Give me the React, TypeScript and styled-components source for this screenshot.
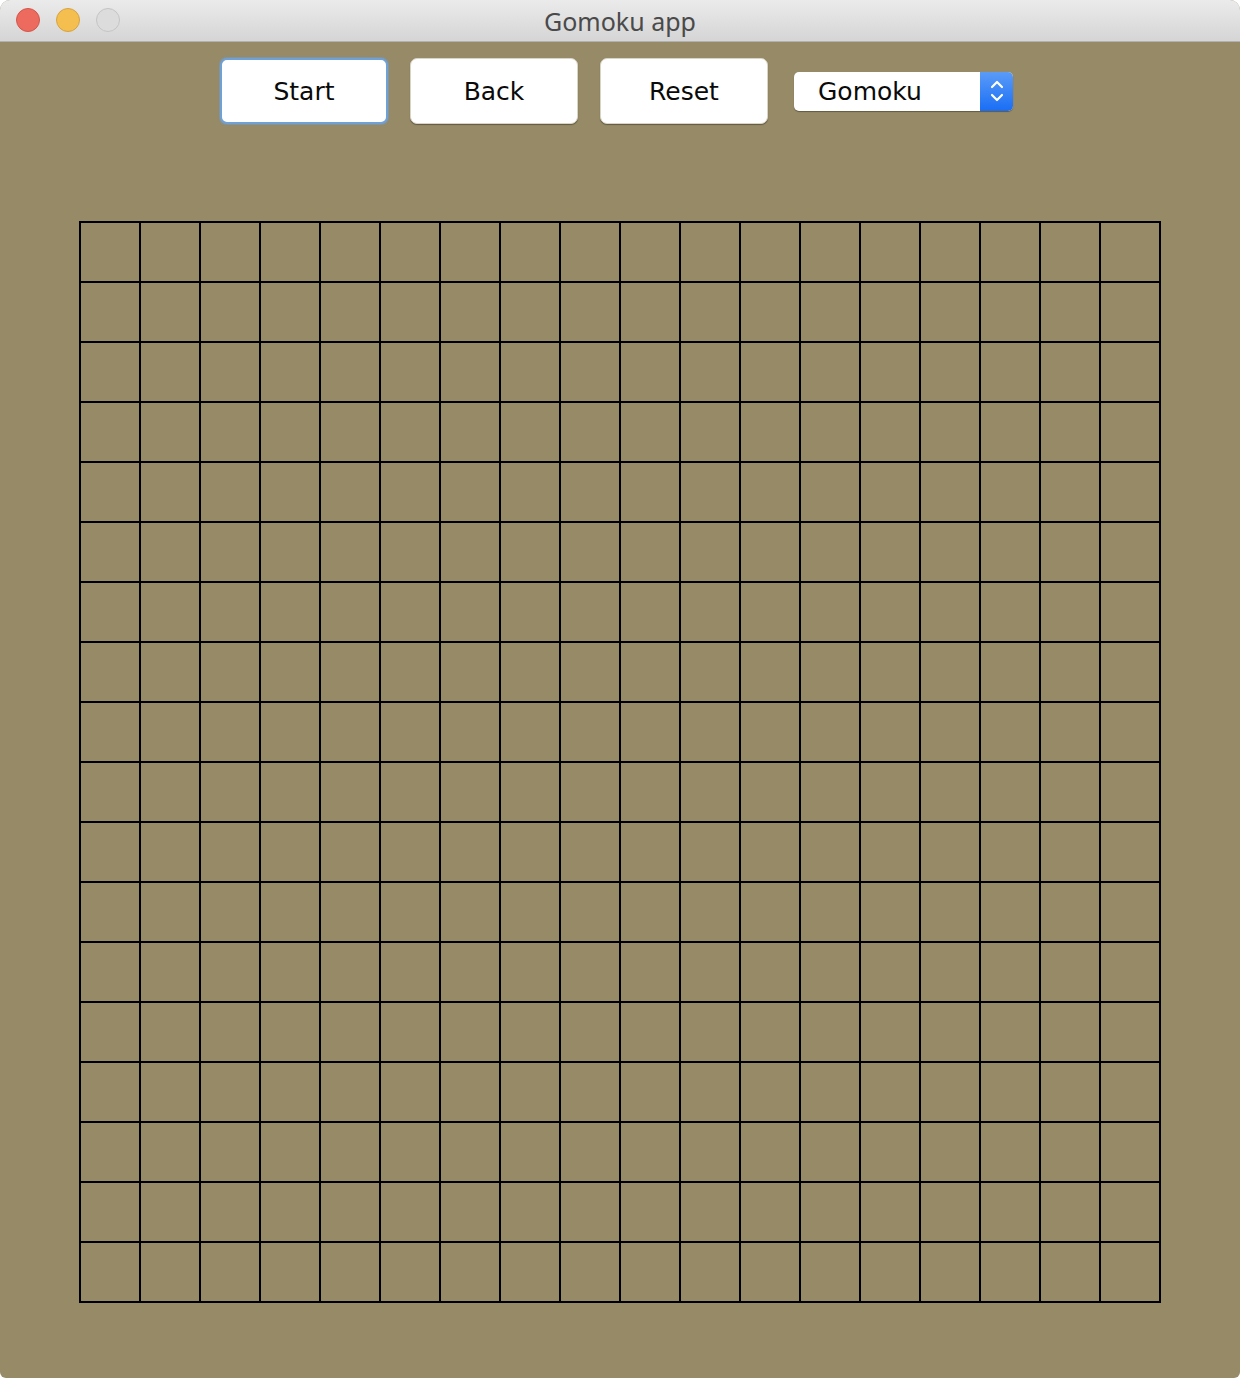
import React from "react";
import styled, { createGlobalStyle } from "styled-components";

const SIZE = 18;

function App() {
  const cells = Array.from({ length: SIZE * SIZE });
  return (
    <>
      <GlobalStyle />
      <Window>
        <TitleBar>
          <Lights>
            <Light color="#ed6a5e" edge="#d2564b" />
            <Light color="#f5bf4f" edge="#d6a243" />
            <Light color="#dcdcdc" edge="#c4c4c4" />
          </Lights>
          <Title>Gomoku app</Title>
        </TitleBar>
        <Content>
          <Toolbar>
            <Button focused>Start</Button>
            <Button>Back</Button>
            <Button>Reset</Button>
            <Select>
              <SelectText>Gomoku</SelectText>
              <SelectArrows>
                <svg width="16" height="26" viewBox="0 0 16 26">
                  <path
                    d="M3 9 L8 4 L13 9 M3 17 L8 22 L13 17"
                    fill="none"
                    stroke="#fff"
                    strokeWidth="2.2"
                    strokeLinecap="round"
                    strokeLinejoin="round"
                  />
                </svg>
              </SelectArrows>
            </Select>
          </Toolbar>
          <Board>
            {cells.map((_, i) => (
              <Cell key={i} />
            ))}
          </Board>
        </Content>
      </Window>
    </>
  );
}

const GlobalStyle = createGlobalStyle`
  body {
    margin: 0;
    background: #ffffff;
    font-family: "DejaVu Sans", "Liberation Sans", sans-serif;
  }
`;

const Window = styled.div`
  width: 1240px;
  height: 1378px;
  display: flex;
  flex-direction: column;
  border-radius: 10px 10px 6px 6px;
  overflow: hidden;
  background: #978a66;
`;

const TitleBar = styled.div`
  height: 41px;
  flex-shrink: 0;
  display: flex;
  align-items: center;
  justify-content: center;
  position: relative;
  background: linear-gradient(#ebebeb, #d5d5d5);
  border-bottom: 1px solid #b1b1b1;
`;

const Lights = styled.div`
  position: absolute;
  left: 16px;
  top: 8px;
  display: flex;
  gap: 16px;
`;

const Light = styled.div<{ color: string; edge: string }>`
  width: 24px;
  height: 24px;
  border-radius: 50%;
  box-sizing: border-box;
  background: ${(p) => p.color};
  border: 1px solid ${(p) => p.edge};
`;

const Title = styled.div`
  font-family: "Noto Sans", "Liberation Sans", sans-serif;
  font-size: 25px;
  color: #4a4a4a;
`;

const Content = styled.div`
  flex: 1;
  display: flex;
  flex-direction: column;
  align-items: center;
  padding-top: 16px;
`;

const Toolbar = styled.div`
  display: flex;
  align-items: center;
  gap: 22px;
  margin-left: -7px;
`;

const Button = styled.div<{ focused?: boolean }>`
  width: 168px;
  height: 66px;
  box-sizing: border-box;
  display: flex;
  align-items: center;
  justify-content: center;
  background: #ffffff;
  border-radius: 7px;
  font-size: 25px;
  color: #0a0a0a;
  border: ${(p) => (p.focused ? "2px solid #6fa0d6" : "1px solid #d8d4c6")};
  box-shadow: ${(p) =>
    p.focused
      ? "0 0 1px 1px rgba(111, 160, 214, 0.5)"
      : "0 1px 1px rgba(0, 0, 0, 0.35)"};
`;

const Select = styled.div`
  margin-left: 4px;
  width: 219px;
  height: 39px;
  display: flex;
  border-radius: 5px;
  overflow: hidden;
  background: #ffffff;
  box-shadow: 0 1px 1px rgba(0, 0, 0, 0.35);
`;

const SelectText = styled.div`
  flex: 1;
  display: flex;
  align-items: center;
  padding-left: 24px;
  font-size: 25px;
  color: #0a0a0a;
`;

const SelectArrows = styled.div`
  width: 33px;
  display: flex;
  align-items: center;
  justify-content: center;
  background: linear-gradient(#5a9bf7, #1a6ef5);
`;

const Board = styled.div`
  margin-top: 97px;
  display: grid;
  grid-template-columns: repeat(${SIZE}, 60px);
  grid-auto-rows: 60px;
  border-top: 2px solid #000;
  border-left: 2px solid #000;
`;

const Cell = styled.div`
  box-sizing: border-box;
  border-right: 2px solid #000;
  border-bottom: 2px solid #000;
`;

export default App;
